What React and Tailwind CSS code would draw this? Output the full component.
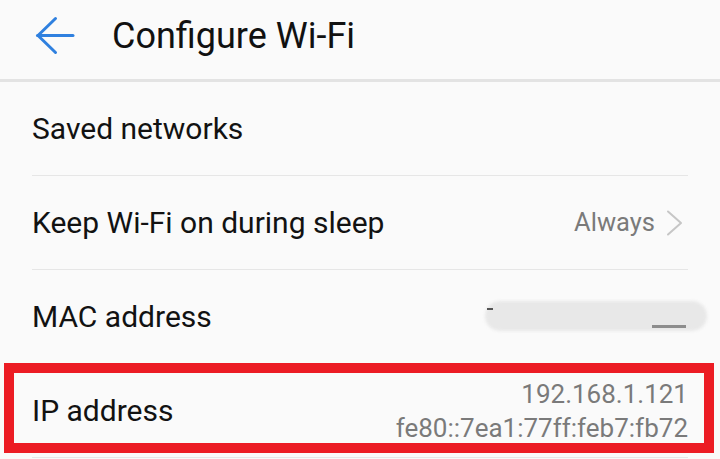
import React from "react";

const BackArrow = () => (
    <svg width="40" height="40" viewBox="0 0 40 40" fill="none" className="shrink-0">
        <path d="M2.5 19.5 H38" stroke="#2f80df" strokeWidth="3" strokeLinecap="round" />
        <path d="M20.5 2.5 L3 19.5 L20.5 36.5" stroke="#2f80df" strokeWidth="3" strokeLinecap="round" strokeLinejoin="round" />
    </svg>
)

const Chevron = () => (
    <svg width="18" height="26" viewBox="0 0 18 26" fill="none" className="shrink-0">
        <path d="M2 1.5 L15 13 L2 24.5" stroke="#c6c6c6" strokeWidth="2" strokeLinecap="round" strokeLinejoin="round" />
    </svg>
)

const Row = ({ label, children, className = "" }) => {
    return (
        <div className={`mx-8 h-[94px] border-b border-[#e6e6e6] flex items-center justify-between ${className}`}>
            <span className="text-[30px] text-[#121212] leading-none">{label}</span>
            {children}
        </div>
    )
}

export default function App() {
    return (
        <div className="w-[720px] h-[459px] bg-[#fafafa] overflow-hidden font-['Roboto',sans-serif]">
            <header className="h-[82px] border-b-[3px] border-[#e3e3e3] flex items-center pl-[35px] pb-[8px]">
                <BackArrow />
                <h1 className="ml-[37px] text-[36px] text-[#111] leading-none">Configure Wi-Fi</h1>
            </header>

            <Row label="Saved networks" />

            <Row label="Keep Wi-Fi on during sleep">
                <div className="flex items-center gap-[11px] mr-[4px]">
                    <span className="text-[25.5px] text-[#7a7a7a] leading-none">Always</span>
                    <Chevron />
                </div>
            </Row>

            <Row label="MAC address" className="relative">
                {/* redacted value */}
                <div className="absolute left-[453px] top-[31px] w-[222px] h-[30px] rounded-full bg-[#e8e8e8] blur-[1.5px]" />
                <div className="absolute left-[455px] top-[38px] w-[6px] h-[2px] bg-[#555]" />
                <div className="absolute left-[620px] top-[55px] w-[34px] h-[3px] bg-[#666] opacity-70" />
            </Row>

            <Row label="IP address" className="relative">
                <div className="flex flex-col items-end text-[26px] leading-[34px] text-[#7a7a7a] mt-[1px]">
                    <span>192.168.1.121</span>
                    <span>fe80::7ea1:77ff:feb7:fb72</span>
                </div>
                <div className="absolute -left-[28px] -top-[1px] w-[710px] h-[90px] border-[10px] border-[#ec1c24] pointer-events-none" />
            </Row>
        </div>
    )
}
